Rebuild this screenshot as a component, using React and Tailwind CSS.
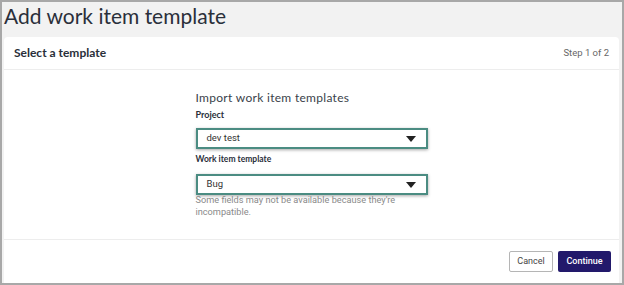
import React from "react";

const Caret = () => (
    <svg width="10" height="6" viewBox="0 0 10 6" className="text-[#222]">
        <path d="M0 0 L10 0 L5 6 Z" fill="currentColor" />
    </svg>
);

const Select = ({ value }) => (
    <div className="flex h-[21px] w-[232px] items-center justify-between border-2 border-[#4b8c82] bg-white pl-[9px] pr-[10px] shadow-[0_1px_3px_rgba(0,0,0,0.35)]">
        <span className="text-[9.5px] text-[#333]" style={{ fontFamily: "Roboto, sans-serif" }}>{value}</span>
        <Caret />
    </div>
);

const App = () => {
    return (
        <div className="h-[285px] w-[624px] border-2 border-[#a8a8a8] bg-[#f2f2f2] flex flex-col overflow-hidden">
            {/* Title */}
            <div className="h-[35px] pl-[2px] pt-[1px] text-[21px] leading-[26px] text-[#2a2f3a]" style={{ fontFamily: "Lato, sans-serif" }}>
                Add work item template
            </div>

            {/* Card */}
            <div className="ml-[2px] mr-[3px] flex flex-1 flex-col rounded-t-[4px] bg-white">
                <div className="flex h-[33px] items-center justify-between border-b border-[#ededed] px-[10px]">
                    <span className="text-[12px] font-bold text-[#2a2f3a]" style={{ fontFamily: "Lato, sans-serif" }}>Select a template</span>
                    <span className="text-[9.5px] text-[#666]" style={{ fontFamily: "Roboto, sans-serif" }}>Step 1 of 2</span>
                </div>

                <div className="flex h-[170px] justify-center border-b border-[#ededed]">
                    <div className="w-[232px] pt-[20px]">
                        <div className="text-[12px] leading-[16px] text-[#3a3f4a] tracking-[0.3px]" style={{ fontFamily: "Lato, sans-serif" }}>
                            Import work item templates
                        </div>
                        <div className="mt-[3px] text-[9px] font-bold leading-[12px] text-[#2a2f3a]" style={{ fontFamily: "Lato, sans-serif" }}>Project</div>
                        <div className="mt-[7px]"><Select value="dev test" /></div>
                        <div className="mt-[4px] text-[8.5px] font-bold leading-[12px] text-[#2a2f3a]" style={{ fontFamily: "Lato, sans-serif" }}>Work item template</div>
                        <div className="mt-[9px]"><Select value="Bug" /></div>
                        <div className="mt-[-1px] w-[220px] text-[9.2px] leading-[12px] text-[#8a8a8a]" style={{ fontFamily: "Roboto, sans-serif" }}>
                            Some fields may not be available because they're incompatible.
                        </div>
                    </div>
                </div>

                <div className="flex flex-1 items-start justify-end gap-[5px] pt-[11px] pr-[8px]">
                    <button className="h-[21px] w-[44px] rounded-[2px] border border-[#b5b5b5] bg-white text-[9px] text-[#444]" style={{ fontFamily: "Roboto, sans-serif" }}>Cancel</button>
                    <button className="h-[21px] w-[53px] rounded-[2px] bg-[#22196b] text-[9px] font-medium text-white" style={{ fontFamily: "Roboto, sans-serif" }}>Continue</button>
                </div>
            </div>
        </div>
    );
};

export default App;
